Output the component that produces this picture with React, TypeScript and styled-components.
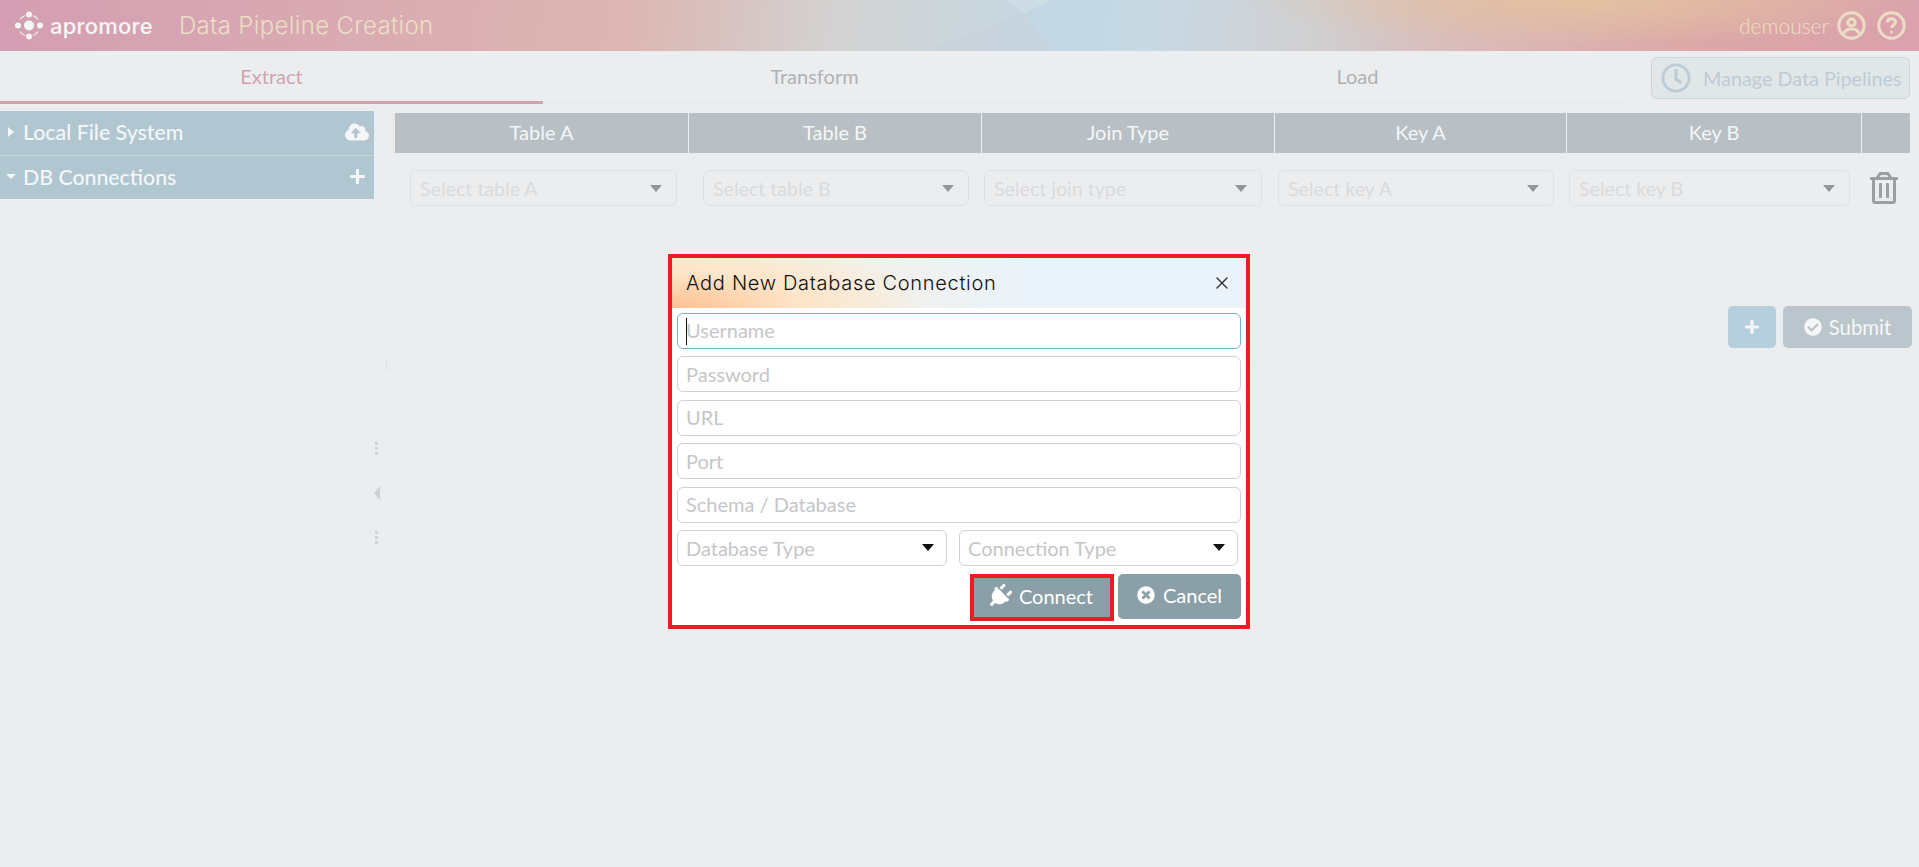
import * as React from 'react';
import styled, { createGlobalStyle } from 'styled-components';
import {
	FaCheckCircle,
	FaCloudUploadAlt,
	FaPlug,
	FaPlus,
	FaRegClock,
	FaRegTrashAlt,
	FaTimesCircle,
} from 'react-icons/fa';
import { X } from 'lucide-react';

const BODY_FONT = '"Lato", "Open Sans", "Liberation Sans", sans-serif';
const TITLE_FONT = '"Inter", "Noto Sans", "Liberation Sans", sans-serif';
const RED = '#ed1c24';
const CREAM = '#eccf9c';

const GlobalStyle = createGlobalStyle`
	html, body {
		margin: 0;
		height: 100%;
		overflow: hidden;
		background: #ecedef;
	}
	* {
		box-sizing: border-box;
	}
`;

const Page = styled.div`
	display: flex;
	flex-direction: column;
	height: 867px;
	font-family: ${BODY_FONT};
	background: #ecedef;
`;

const Header = styled.header`
	position: relative;
	display: flex;
	align-items: center;
	height: 51px;
	padding: 0 13px 0 15px;
	overflow: hidden;
	background: radial-gradient(ellipse 340px 46px at 1585px 0, #dc9650 0%, rgba(220, 150, 80, 0) 100%),
		linear-gradient(
			97deg,
			#bc4f74 0%,
			#c86a74 20%,
			#cc8074 33%,
			#bab8b6 44%,
			#9ec1d4 54%,
			#a4c3d8 60%,
			#b4b2b4 68%,
			#c98a84 76%,
			#cc6260 88%,
			#c8566a 100%
		);
`;

const HeaderArt = styled.svg`
	position: absolute;
	top: 0;
	left: 0;
	width: 100%;
	height: 100%;
`;

const LogoMark = styled.svg`
	position: relative;
	width: 28px;
	height: 29px;
	margin-right: 7px;
`;

const LogoText = styled.span`
	position: relative;
	font-family: ${TITLE_FONT};
	font-size: 22px;
	font-weight: 500;
	letter-spacing: 0.2px;
	color: #fff;
`;

const AppTitle = styled.span`
	position: relative;
	margin-left: 26px;
	font-family: ${TITLE_FONT};
	font-size: 24px;
	font-weight: 300;
	letter-spacing: 0.35px;
	color: ${CREAM};
`;

const UserBox = styled.div`
	position: relative;
	display: flex;
	align-items: center;
	margin-left: auto;
	font-size: 21px;
	font-weight: 300;
	color: ${CREAM};
	svg {
		margin-left: 8px;
	}
	svg + svg {
		margin-left: 11px;
	}
`;

const TopBar = styled.div`
	display: flex;
	height: 60px;
`;

const Tabs = styled.nav`
	display: grid;
	grid-template-columns: repeat(3, 543px);
	width: 1630px;
	height: 53px;
	border-bottom: 1px solid #e2e4e6;
`;

const Tab = styled.div<{ $active?: boolean }>`
	display: flex;
	align-items: center;
	justify-content: center;
	height: 53px;
	padding-bottom: 1px;
	font-size: 20px;
	color: ${(p) => (p.$active ? '#b5586f' : '#6f767a')};
	border-bottom: 3px solid ${(p) => (p.$active ? '#b5586f' : 'transparent')};
`;

const ManageButton = styled.button`
	display: flex;
	align-items: center;
	gap: 12px;
	width: 259px;
	height: 42px;
	margin: 6px 0 0 21px;
	padding: 0 0 0 9px;
	font-family: ${BODY_FONT};
	font-size: 19.8px;
	color: #8fa9b8;
	background: #d7dee2;
	border: 1px solid #a9c0cd;
	border-radius: 6px;
	svg {
		font-size: 30px;
	}
`;

const Main = styled.main`
	display: flex;
	flex: 1;
	min-height: 0;
`;

const Sidebar = styled.aside`
	width: 374px;
	flex: none;
`;

const SideRow = styled.div`
	display: flex;
	align-items: center;
	height: 44px;
	padding: 0 5px 2px 8px;
	font-size: 21.3px;
	font-weight: 500;
	color: #fff;
	background: #749eb2;
	& + & {
		border-top: 1px solid #a4c0cd;
	}
`;

const Caret = styled.span<{ $open?: boolean }>`
	width: 0;
	height: 0;
	margin-right: 7px;
	${(p) =>
		p.$open
			? 'border-left: 5px solid transparent; border-right: 5px solid transparent; border-top: 5px solid #fff; margin-left: -2px;'
			: 'border-top: 5px solid transparent; border-bottom: 5px solid transparent; border-left: 6px solid #fff; margin-right: 9px;'}
`;

const SideIcon = styled.span`
	display: flex;
	margin-left: auto;
	font-size: 24px;
	color: #fff;
`;

const Splitter = styled.div`
	position: relative;
	display: flex;
	flex-direction: column;
	align-items: flex-start;
	gap: 31px;
	flex: none;
	width: 21px;
	padding: 331px 0 0;
	border-right: 7px solid #e9eaec;
`;

const SplitterTick = styled.span`
	position: absolute;
	top: 248px;
	left: 12px;
	width: 1px;
	height: 12px;
	background: #cfd1d3;
`;

const GripDots = styled.span`
	display: flex;
	flex-direction: column;
	gap: 2px;
	width: 3px;
	margin-left: 1px;
	span {
		width: 3px;
		height: 3px;
		background: #b4b6b8;
	}
`;

const CollapseArrow = styled.span`
	width: 0;
	height: 0;
	border-top: 7px solid transparent;
	border-bottom: 7px solid transparent;
	border-right: 6px solid #aeb1b3;
`;

const Content = styled.section`
	flex: none;
	width: 1515px;
	padding-top: 2px;
`;

const ColumnGrid = styled.div`
	display: grid;
	grid-template-columns: 294px 293px 293px 292px 295px 48px;
`;

const HeadCell = styled.div`
	display: flex;
	align-items: center;
	justify-content: center;
	height: 40px;
	padding-bottom: 2px;
	font-size: 20px;
	color: #fff;
	background: #84929a;
	border-right: 1px solid #f2f3f4;
	&:last-child {
		border-right: 0;
	}
`;

const JoinRow = styled.div`
	display: flex;
	align-items: center;
	height: 36px;
	margin-top: 17px;
	padding-left: 15px;
`;

const JoinSelect = styled.div<{ $width: number; $gap: number }>`
	display: flex;
	align-items: center;
	justify-content: space-between;
	width: ${(p) => p.$width}px;
	height: 36px;
	margin-right: ${(p) => p.$gap}px;
	padding: 0 14px 0 9px;
	font-size: 19.6px;
	color: #c4c7c9;
	border: 1px solid #d3d5d7;
	border-radius: 6px;
`;

const DownArrow = styled.span<{ $color: string }>`
	width: 0;
	height: 0;
	border-left: 6px solid transparent;
	border-right: 6px solid transparent;
	border-top: 7px solid ${(p) => p.$color};
`;

const TrashIcon = styled.span`
	display: flex;
	margin-left: 18px;
	font-size: 32px;
	color: #4d4f51;
`;

const ActionRow = styled.div`
	display: flex;
	justify-content: flex-end;
	gap: 7px;
	margin: 100px -2px 0 0;
	padding-bottom: 10px;
	border-bottom: 12px solid #e9eaec;
`;

const ActionButton = styled.button<{ $bg: string; $width: number }>`
	display: flex;
	align-items: center;
	justify-content: center;
	gap: 7px;
	width: ${(p) => p.$width}px;
	height: 42px;
	padding: 0 0 1px;
	font-family: ${BODY_FONT};
	font-size: 20.4px;
	color: #fff;
	background: ${(p) => p.$bg};
	border: 0;
	border-radius: 5px;
`;

const Mask = styled.div`
	position: fixed;
	inset: 0;
	background: rgba(236, 238, 240, 0.5);
`;

const Dialog = styled.div`
	position: fixed;
	top: 254px;
	left: 668px;
	width: 582px;
	height: 375px;
	background: #fff;
	border: 4px solid ${RED};
	font-family: ${BODY_FONT};
`;

const DialogHead = styled.div`
	display: flex;
	align-items: center;
	justify-content: space-between;
	height: 50px;
	padding: 0 14px;
	font-family: ${TITLE_FONT};
	font-size: 20px;
	font-weight: 300;
	letter-spacing: 0.7px;
	color: #111;
	background: radial-gradient(ellipse 260px 70px at 0% 100%, #ffbf90 0%, #fde5c8 50%, rgba(253, 232, 205, 0) 100%),
		linear-gradient(90deg, #fdeed9 0%, #eaf3fa 62%);
	svg {
		color: #333;
	}
`;

const DialogBody = styled.div`
	display: flex;
	flex-direction: column;
	gap: 7.5px;
	padding: 4.5px 5px 0;
`;

const Field = styled.div`
	position: relative;
`;

const Input = styled.input<{ $focused?: boolean }>`
	display: block;
	width: 100%;
	height: 36px;
	padding: 0 8px 1px;
	font-family: ${BODY_FONT};
	font-size: 20px;
	background: #fff;
	border: 1px solid ${(p) => (p.$focused ? '#74b3cf' : '#d0d2d4')};
	border-radius: 6px;
	outline: none;
	&::placeholder {
		color: #c6c6c8;
		opacity: 1;
	}
`;

const TextCaret = styled.span`
	position: absolute;
	top: 5px;
	left: 9px;
	width: 1px;
	height: 27px;
	background: #111;
`;

const SelectRow = styled.div`
	display: grid;
	grid-template-columns: 270px 279px;
	gap: 12px;
`;

const DialogSelect = styled.div`
	display: flex;
	align-items: center;
	justify-content: space-between;
	height: 36px;
	padding: 0 12px 1px 8px;
	font-size: 20px;
	color: #c6c6c8;
	border: 1px solid #d0d2d4;
	border-radius: 6px;
`;

const DialogActions = styled.div`
	display: flex;
	align-items: flex-start;
	justify-content: flex-end;
	gap: 4px;
`;

const DialogButton = styled.button<{ $width: number; $outlined?: boolean }>`
	display: flex;
	align-items: center;
	justify-content: center;
	gap: 8px;
	width: ${(p) => p.$width}px;
	height: ${(p) => (p.$outlined ? 47 : 45)}px;
	padding: 0 0 2px;
	font-family: ${BODY_FONT};
	font-size: 20px;
	color: #fff;
	background: #8a9fa8;
	border: ${(p) => (p.$outlined ? `4px solid ${RED}` : '0')};
	border-radius: ${(p) => (p.$outlined ? '0' : '5px')};
`;

const PlugIcon = styled(FaPlug)`
	font-size: 25px;
	transform: rotate(45deg);
	margin: 0 -1px 0 -4px;
`;

const Logo: React.FC = () => (
	<LogoMark viewBox="0 0 28 29" fill="#fff">
		<circle cx="14" cy="14.5" r="5" />
		<circle cx="14" cy="3.5" r="3" />
		<circle cx="14" cy="25.5" r="3" />
		<circle cx="3" cy="14.5" r="3" />
		<circle cx="25" cy="14.5" r="3" />
		<path
			d="M5 8.5 A11 11 0 0 1 10 4.5 M18 4.5 A11 11 0 0 1 23 8.5 M23 20.5 A11 11 0 0 1 18 24.5 M10 24.5 A11 11 0 0 1 5 20.5"
			stroke="#fff"
			strokeWidth="1.2"
			fill="none"
		/>
	</LogoMark>
);

const UserIcon: React.FC = () => (
	<svg width="29" height="29" viewBox="0 0 29 29" fill="none" stroke={CREAM} strokeWidth="3">
		<circle cx="14.5" cy="14.5" r="12.7" />
		<circle cx="14.5" cy="11.5" r="3.6" />
		<path d="M7 22.5c1-3.5 3.5-4.5 7.5-4.5s6.500 1 7.500 4.500" />
	</svg>
);

const HelpIcon: React.FC = () => (
	<svg width="29" height="29" viewBox="0 0 29 29" fill="none" stroke={CREAM} strokeWidth="3">
		<circle cx="14.5" cy="14.500" r="12.7" />
		<path d="M10.500 11.500c0-2.500 1.800-3.800 4-3.800s4 1.300 4 3.400c0 3-4 3-4 6" />
		<circle cx="14.500" cy="21" r="1.500" fill={CREAM} stroke="none" />
	</svg>
);

const joinSelects = [
	{ label: 'Select table A', width: 267, gap: 26 },
	{ label: 'Select table B', width: 266, gap: 15 },
	{ label: 'Select join type', width: 278, gap: 16 },
	{ label: 'Select key A', width: 276, gap: 15 },
	{ label: 'Select key B', width: 281, gap: 0 },
];

const headColumns = ['Table A', 'Table B', 'Join Type', 'Key A', 'Key B', ''];

const textFields = ['Password', 'URL', 'Port', 'Schema / Database'];

const App: React.FC = () => (
	<>
		<GlobalStyle />
		<Page>
			<Header>
				<HeaderArt viewBox="0 0 1919 51" preserveAspectRatio="none">
					<polygon points="925,51 1024,13 1052,51" fill="#a4b4c8" opacity="0.5" />
					<polygon points="1024,13 1052,0 1120,0 1120,51 1052,51" fill="#93c6e0" opacity="0.35" />
					<polygon points="1024,13 1005,0 1052,0" fill="#c4dcea" opacity="0.4" />
				</HeaderArt>
				<Logo />
				<LogoText>apromore</LogoText>
				<AppTitle>Data Pipeline Creation</AppTitle>
				<UserBox>
					demouser
					<UserIcon />
					<HelpIcon />
				</UserBox>
			</Header>
			<TopBar>
				<Tabs>
					<Tab $active>Extract</Tab>
					<Tab>Transform</Tab>
					<Tab>Load</Tab>
				</Tabs>
				<ManageButton>
					<FaRegClock />
					Manage Data Pipelines
				</ManageButton>
			</TopBar>
			<Main>
				<Sidebar>
					<SideRow>
						<Caret />
						Local File System
						<SideIcon>
							<FaCloudUploadAlt />
						</SideIcon>
					</SideRow>
					<SideRow>
						<Caret $open />
						DB Connections
						<SideIcon>
							<FaPlus size={17} style={{ marginRight: 3 }} />
						</SideIcon>
					</SideRow>
				</Sidebar>
				<Splitter>
					<SplitterTick />
					<GripDots>
						<span />
						<span />
						<span />
					</GripDots>
					<CollapseArrow />
					<GripDots>
						<span />
						<span />
						<span />
					</GripDots>
				</Splitter>
				<Content>
					<ColumnGrid>
						{headColumns.map((title, index) => (
							<HeadCell key={index}>{title}</HeadCell>
						))}
					</ColumnGrid>
					<JoinRow>
						{joinSelects.map((item) => (
							<JoinSelect key={item.label} $width={item.width} $gap={item.gap}>
								{item.label}
								<DownArrow $color="#3a3c3e" />
							</JoinSelect>
						))}
						<TrashIcon>
							<FaRegTrashAlt />
						</TrashIcon>
					</JoinRow>
					<ActionRow>
						<ActionButton $bg="#7eb2c8" $width={48}>
							<FaPlus size={16} />
						</ActionButton>
						<ActionButton $bg="#8a9fa8" $width={129}>
							<FaCheckCircle size={18} />
							Submit
						</ActionButton>
					</ActionRow>
				</Content>
			</Main>
		</Page>
		<Mask />
		<Dialog>
			<DialogHead>
				Add New Database Connection
				<X size={20} strokeWidth={1.6} />
			</DialogHead>
			<DialogBody>
				<Field>
					<Input placeholder="Username" $focused readOnly />
					<TextCaret />
				</Field>
				{textFields.map((name) => (
					<Input key={name} placeholder={name} readOnly />
				))}
				<SelectRow>
					<DialogSelect>
						Database Type
						<DownArrow $color="#111" />
					</DialogSelect>
					<DialogSelect>
						Connection Type
						<DownArrow $color="#111" />
					</DialogSelect>
				</SelectRow>
				<DialogActions>
					<DialogButton $width={144} $outlined>
						<PlugIcon />
						Connect
					</DialogButton>
					<DialogButton $width={123}>
						<FaTimesCircle size={18} />
						Cancel
					</DialogButton>
				</DialogActions>
			</DialogBody>
		</Dialog>
	</>
);

export default App;
